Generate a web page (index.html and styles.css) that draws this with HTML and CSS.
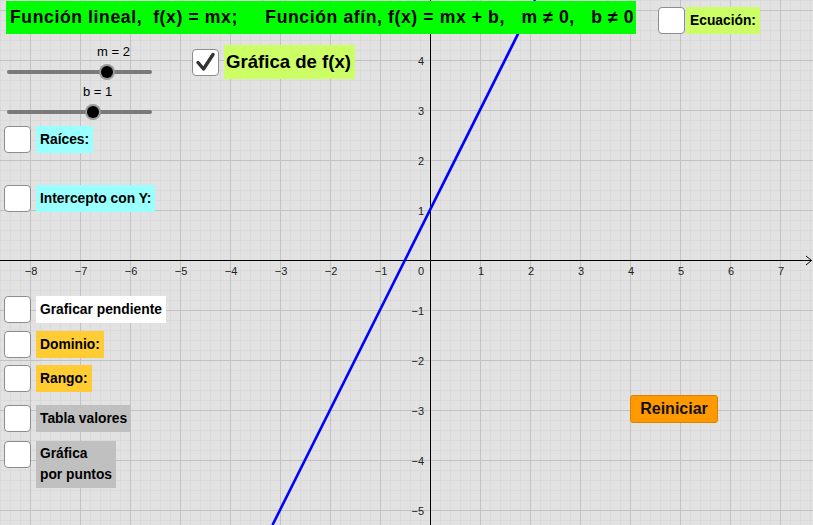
FILE: index.html
```html
<!DOCTYPE html>
<html lang="es">
<head>
<meta charset="utf-8">
<title>Función lineal y afín</title>
<link rel="stylesheet" href="styles.css">
</head>
<body>
<div class="applet">
  <svg class="graph" width="813" height="525" viewBox="0 0 813 525">
    <defs>
      <pattern id="minor" patternUnits="userSpaceOnUse" x="0" y="0" width="10" height="10">
        <rect x="0" y="0" width="1" height="10" fill="#dadada"/>
        <rect x="0" y="0" width="10" height="1" fill="#dadada"/>
      </pattern>
      <pattern id="major" patternUnits="userSpaceOnUse" x="30" y="10" width="50" height="50">
        <rect x="0" y="0" width="1" height="50" fill="#c2c2c2"/>
        <rect x="0" y="0" width="50" height="1" fill="#c2c2c2"/>
      </pattern>
    </defs>
    <rect width="813" height="525" fill="#e2e2e2"/>
    <rect width="813" height="525" fill="url(#minor)"/>
    <rect width="813" height="525" fill="url(#major)"/>
    <rect x="0" y="260" width="812" height="1" fill="#000"/>
    <rect x="430" y="0" width="1" height="525" fill="#000"/>
    <path d="M806 256 L811.5 260.5 L806 265" fill="none" stroke="#000" stroke-width="1"/>
    <g class="ticks">
      <text x="31" y="275">−8</text>
      <text x="81" y="275">−7</text>
      <text x="131" y="275">−6</text>
      <text x="181" y="275">−5</text>
      <text x="231" y="275">−4</text>
      <text x="281" y="275">−3</text>
      <text x="331" y="275">−2</text>
      <text x="381" y="275">−1</text>
      <text x="421" y="275">0</text>
      <text x="481" y="275">1</text>
      <text x="531" y="275">2</text>
      <text x="581" y="275">3</text>
      <text x="631" y="275">4</text>
      <text x="681" y="275">5</text>
      <text x="731" y="275">6</text>
      <text x="781" y="275">7</text>
    </g>
    <g class="ticks yticks">
      <text x="424" y="65">4</text>
      <text x="424" y="115">3</text>
      <text x="424" y="165">2</text>
      <text x="424" y="215">1</text>
      <text x="424" y="315">−1</text>
      <text x="424" y="365">−2</text>
      <text x="424" y="415">−3</text>
      <text x="424" y="465">−4</text>
      <text x="424" y="515">−5</text>
    </g>
    <line x1="535" y1="0" x2="272.5" y2="525" stroke="#0000ff" stroke-width="2.6"/>
  </svg>

  <div class="banner">Función lineal,  f(x) = mx;     Función afín, f(x) = mx + b,   m ≠ 0,   b ≠ 0</div>

  <div class="sliders">
    <div class="slider">
      <div class="slabel slabel-m">m = 2</div>
      <svg class="track" width="160" height="18" viewBox="0 0 160 18">
        <line x1="9" y1="9" x2="150" y2="9" stroke="#7a7a7a" stroke-width="4" stroke-linecap="round"/>
        <circle cx="107" cy="9" r="8" fill="#9a9a9a"/>
        <circle cx="107" cy="9" r="6" fill="#000"/>
      </svg>
    </div>
    <div class="slider">
      <div class="slabel slabel-b">b = 1</div>
      <svg class="track" width="160" height="18" viewBox="0 0 160 18">
        <line x1="9" y1="9" x2="150" y2="9" stroke="#7a7a7a" stroke-width="4" stroke-linecap="round"/>
        <circle cx="93" cy="9" r="8" fill="#9a9a9a"/>
        <circle cx="93" cy="9" r="6" fill="#000"/>
      </svg>
    </div>
  </div>

  <div class="widget w-grafica">
    <span class="box checked">
      <svg width="25" height="25" viewBox="0 0 25 25"><path d="M5 12.5 L10.5 19 L20 4.5" fill="none" stroke="#333" stroke-width="3.4" stroke-linecap="round" stroke-linejoin="round"/></svg>
    </span>
    <span class="lbl lbl-big bg-lime">Gráfica de f(x)</span>
  </div>

  <div class="widget w-ecuacion">
    <span class="box"></span>
    <span class="lbl bg-lime">Ecuación:</span>
  </div>

  <div class="leftpanel">
    <div class="row"><span class="box"></span><span class="lbl bg-cyan">Raíces:</span></div>
    <div class="row row-intercept"><span class="box"></span><span class="lbl bg-cyan">Intercepto con Y:</span></div>
    <div class="row row-pend"><span class="box"></span><span class="lbl bg-white">Graficar pendiente</span></div>
    <div class="row row-dom"><span class="box"></span><span class="lbl bg-orange">Dominio:</span></div>
    <div class="row row-rango"><span class="box"></span><span class="lbl bg-orange">Rango:</span></div>
    <div class="row row-tabla"><span class="box"></span><span class="lbl bg-gray">Tabla valores</span></div>
    <div class="row row-puntos"><span class="box"></span><span class="lbl lbl-two bg-gray">Gráfica<br>por puntos</span></div>
  </div>

  <button class="reset">Reiniciar</button>
</div>
</body>
</html>
```

FILE: styles.css
```css
* { box-sizing: border-box; }
html, body { margin: 0; padding: 0; }
body {
  font-family: "Liberation Sans", Arial, sans-serif;
  background: #e2e2e2;
}
.applet {
  position: relative;
  width: 813px;
  height: 525px;
  overflow: hidden;
}
.graph {
  position: absolute;
  left: 0;
  top: 0;
  display: block;
}
.ticks text {
  font-family: "Liberation Sans", Arial, sans-serif;
  font-size: 11px;
  fill: #222;
  text-anchor: middle;
}
.yticks text { text-anchor: end; }

.banner {
  position: absolute;
  left: 6px;
  top: 1px;
  width: 630px;
  height: 33px;
  background: #00ff00;
  color: #000;
  font-weight: bold;
  font-size: 17.6px;
  letter-spacing: 0.6px;
  line-height: 33px;
  padding-left: 4px;
  white-space: pre;
  overflow: hidden;
}

.sliders {
  position: absolute;
  left: 0;
  top: 44px;
  display: flex;
  flex-direction: column;
}
.slider { display: flex; flex-direction: column; }
.slabel {
  font-size: 13px;
  line-height: 15px;
  color: #000;
}
.slabel-m { padding-left: 97px; }
.slabel-b { padding-left: 83px; margin-top: 3px; }
.track { display: block; margin-top: 4px; }

.box {
  display: inline-flex;
  align-items: center;
  justify-content: center;
  width: 27px;
  height: 27px;
  flex: none;
  background: #fff;
  border: 1.5px solid #8c8c8c;
  border-radius: 4px;
}
.lbl {
  display: inline-block;
  font-size: 13.8px;
  font-weight: bold;
  color: #000;
  line-height: 27px;
  padding: 0 4px;
  white-space: nowrap;
}
.lbl-big { font-size: 18.6px; line-height: 34px; padding: 0 4px 0 2px; }
.lbl-two { line-height: 21px; padding: 2px 4px 3px; }
.bg-lime { background: #ccff66; }
.bg-cyan { background: #99ffff; }
.bg-white { background: #ffffff; }
.bg-orange { background: #ffcc33; }
.bg-gray { background: #c0c0c0; }

.widget {
  position: absolute;
  display: flex;
  align-items: center;
  gap: 5px;
}
.w-grafica { left: 192px; top: 45px; }
.w-ecuacion { left: 658px; top: 7px; gap: 1px; }

.leftpanel {
  position: absolute;
  left: 4px;
  top: 126px;
  display: flex;
  flex-direction: column;
}
.row {
  display: flex;
  align-items: flex-start;
  gap: 5px;
}
.row-intercept { margin-top: 32px; }
.row-pend { margin-top: 84px; }
.row-dom { margin-top: 8px; }
.row-rango { margin-top: 7px; }
.row-tabla { margin-top: 13px; }
.row-puntos { margin-top: 9px; }

.reset {
  position: absolute;
  left: 630px;
  top: 395px;
  width: 88px;
  height: 28px;
  background: #ff9900;
  border: 1px solid #d98200;
  border-radius: 3px;
  font-family: "Liberation Sans", Arial, sans-serif;
  font-size: 16px;
  font-weight: bold;
  color: #111;
  padding: 0;
}
```
